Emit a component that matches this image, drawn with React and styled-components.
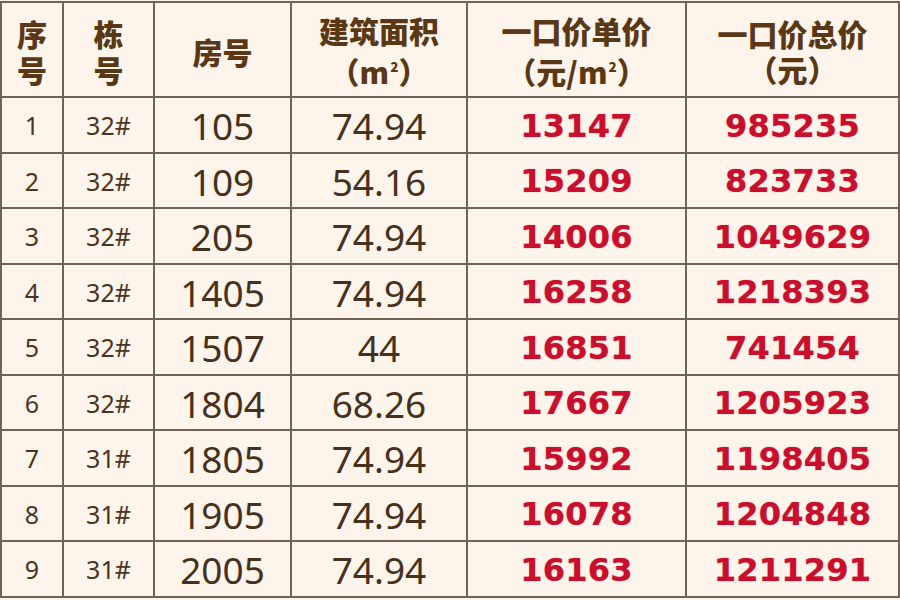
import React from "react";
import styled, { createGlobalStyle } from "styled-components";

const Global = createGlobalStyle`
  html, body { margin: 0; padding: 0; background: #fdf4ec; }
  body { width: 900px; height: 600px; overflow: hidden; }
`;

const Page = styled.div`
  width: 900px;
  height: 600px;
  background: #fdf4ec;
  padding-top: 1px;
  box-sizing: border-box;
`;

const Table = styled.table`
  border-collapse: collapse;
  table-layout: fixed;
  width: 898px;
  background: #fdf4ec;
  font-family: "Noto Sans", "Noto Sans CJK SC", sans-serif;
  color: #4a3620;
`;

const Th = styled.th`
  border: 2px solid #6f6357;
  height: 91px;
  padding: 2px 0 0;
  text-align: center;
  vertical-align: middle;
  font-family: "Noto Sans CJK SC", sans-serif;
  font-weight: 900;
  font-size: 30px;
  line-height: 36px;
  color: #5a3815;
`;

const Td = styled.td`
  border: 2px solid #6f6357;
  height: 51.5px;
  padding: 2px 0 0;
  text-align: center;
  vertical-align: middle;
  white-space: nowrap;
  line-height: 1;
  ${(p) => p.$kind === "small" && `font-size: 25px; color: #4a3620;`}
  ${(p) => p.$kind === "big" && `font-size: 37px; color: #45311c;`}
  ${(p) =>
    p.$kind === "red" &&
    `font-family: "DejaVu Sans", sans-serif; font-weight: 700; font-size: 32px; letter-spacing: 0.2px; color: #c8102c; text-shadow: 0 0 1px #e0566a;`}
`;

const Sup = styled.span`
  font-size: 0.45em;
  vertical-align: 0.9em;
  margin-left: 1px;
`;

const rows = [
  [1, "32#", "105", "74.94", "13147", "985235"],
  [2, "32#", "109", "54.16", "15209", "823733"],
  [3, "32#", "205", "74.94", "14006", "1049629"],
  [4, "32#", "1405", "74.94", "16258", "1218393"],
  [5, "32#", "1507", "44", "16851", "741454"],
  [6, "32#", "1804", "68.26", "17667", "1205923"],
  [7, "31#", "1805", "74.94", "15992", "1198405"],
  [8, "31#", "1905", "74.94", "16078", "1204848"],
  [9, "31#", "2005", "74.94", "16163", "1211291"],
];

export default function App() {
  return (
    <Page>
      <Global />
      <Table>
        <colgroup>
          <col style={{ width: 62 }} />
          <col style={{ width: 91 }} />
          <col style={{ width: 137 }} />
          <col style={{ width: 176 }} />
          <col style={{ width: 219 }} />
          <col style={{ width: 213 }} />
        </colgroup>
        <thead>
          <tr>
            <Th>序<br />号</Th>
            <Th>栋<br />号</Th>
            <Th>房号</Th>
            <Th>建筑面积<br />（m<Sup>2</Sup>）</Th>
            <Th>一口价单价<br />（元/m<Sup>2</Sup>）</Th>
            <Th>一口价总价<br />（元）</Th>
          </tr>
        </thead>
        <tbody>
          {rows.map((r) => (
            <tr key={r[0]}>
              <Td $kind="small">{r[0]}</Td>
              <Td $kind="small">{r[1]}</Td>
              <Td $kind="big">{r[2]}</Td>
              <Td $kind="big">{r[3]}</Td>
              <Td $kind="red">{r[4]}</Td>
              <Td $kind="red">{r[5]}</Td>
            </tr>
          ))}
        </tbody>
      </Table>
    </Page>
  );
}
